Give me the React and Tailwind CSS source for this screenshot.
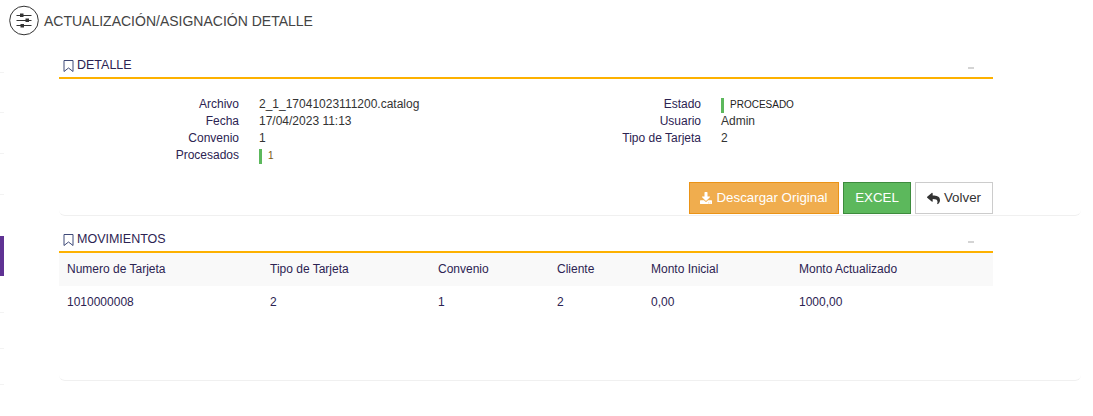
import React from 'react';
import { FaDownload, FaReply } from 'react-icons/fa';

const leftInfo = [
  ['Archivo', '2_1_17041023111200.catalog'],
  ['Fecha', '17/04/2023 11:13'],
  ['Convenio', '1'],
];

const rightInfo = [
  ['Usuario', 'Admin'],
  ['Tipo de Tarjeta', '2'],
];

const columns = [
  ['Numero de Tarjeta', '1010000008', 'w-[203px]'],
  ['Tipo de Tarjeta', '2', 'w-[168px]'],
  ['Convenio', '1', 'w-[119px]'],
  ['Cliente', '2', 'w-[94px]'],
  ['Monto Inicial', '0,00', 'w-[148px]'],
  ['Monto Actualizado', '1000,00', 'w-[202px]'],
];

function InfoRow({ label, children }) {
  return (
    <div className="flex h-[17px] items-center">
      <div className="w-[180px] text-right text-[#2c2352]">{label}</div>
      <div className="ml-5 flex items-center text-[#333]">{children}</div>
    </div>
  );
}

function StatusValue({ children, className }) {
  return (
    <>
      <span className="mt-[4px] h-[15px] w-[3px] bg-[#5cb85c]" />
      <span className={className}>{children}</span>
    </>
  );
}

function SectionHeader({ title, textOffset }) {
  return (
    <div className={`flex w-[934px] items-end justify-between border-b-2 border-[#fdb100] pl-1 pr-[19px] ${textOffset}`}>
      <div className="flex items-center gap-[3px] text-[12.5px] leading-[15px] text-[#2c2352]">
        <svg width="11" height="12" viewBox="0 0 11 12" fill="none" stroke="#3f4a78" strokeWidth="1">
          <path d="M1 .5h9v11L5.5 8 1 11.5z" />
        </svg>
        {title}
      </div>
      <span className="mb-[4px] h-[2px] w-[6px] bg-[#d4d4d4]" />
    </div>
  );
}

function App() {
  return (
    <div className="flex h-[416px] w-[1093px] overflow-hidden bg-white font-['Liberation_Sans',Arial,sans-serif] text-xs">
      <div className="w-[4px] pt-[32px]">
        <div className="h-[41px] border-b border-[#f3f3f3]" />
        <div className="h-[40px] border-b border-[#f3f3f3]" />
        <div className="h-[41px] border-b border-[#f3f3f3]" />
        <div className="h-[41px] border-b border-[#f3f3f3]" />
        <div className="mt-[41px] h-10 bg-[#5f3293]" />
        <div className="h-[37px] border-b border-[#f3f3f3]" />
        <div className="h-[36px] border-b border-[#f3f3f3]" />
        <div className="h-[36px] border-b border-[#f3f3f3]" />
      </div>

      <div className="flex-1">
        <div className="flex h-[42px] items-start gap-[5px] pl-[5px] pt-[5px]">
          <svg width="30" height="31" viewBox="0 0 30 31" fill="none" stroke="#333" strokeWidth="1">
            <circle cx="15" cy="15.5" r="14.3" />
            <path d="M7.5 10.5h15M7.5 15.5h15M7.5 20.5h15" />
            <path fill="#333" stroke="none" d="M11 8.5h3.5v3.5H11zM16.5 13.5H20v3.5h-3.5zM11.5 19H15v3.5h-3.5z" />
          </svg>
          <h1 className="mt-[7px] text-[14px] leading-[18px] font-normal text-[#444]">ACTUALIZACIÓN/ASIGNACIÓN DETALLE</h1>
        </div>

        <div className="ml-[55px] h-[174px] w-[1022px] rounded-b-md border-b border-[#f0f0f0]">
          <SectionHeader title="DETALLE" textOffset="h-[37px] pb-[4px]" />
          <div className="mt-[16px] grid w-[924px] grid-cols-2">
            <div>
              {leftInfo.map(([label, value]) => (
                <InfoRow key={label} label={label}>{value}</InfoRow>
              ))}
              <InfoRow label="Procesados">
                <StatusValue className="mt-[2px] ml-[6px] text-[10px] text-[#7a5a14]">1</StatusValue>
              </InfoRow>
            </div>
            <div>
              <InfoRow label="Estado">
                <StatusValue className="mt-[2px] ml-[6px] text-[10px] text-[#222]">PROCESADO</StatusValue>
              </InfoRow>
              {rightInfo.map(([label, value]) => (
                <InfoRow key={label} label={label}>{value}</InfoRow>
              ))}
            </div>
          </div>
          <div className="mt-[19px] flex w-[934px] justify-end gap-1 text-[13.33px]">
            <button className="flex h-8 w-[150px] items-center justify-center gap-1 border border-[#eb9316] bg-[#f0ad4e] text-white">
              <FaDownload size={12} />
              Descargar Original
            </button>
            <button className="h-8 w-[68px] border border-[#3d8b3d] bg-[#5cb85c] text-white">EXCEL</button>
            <button className="flex h-8 w-[78px] items-center justify-center gap-1 border border-[#ccc] bg-white text-[#333]">
              <FaReply size={13} />
              Volver
            </button>
          </div>
        </div>

        <div className="ml-[55px] h-[165px] w-[1022px] rounded-b-md border-b border-[#f0f0f0]">
          <SectionHeader title="MOVIMIENTOS" textOffset="h-[37px] pb-[4px]" />
          <table className="w-[934px] table-fixed text-left">
            <thead>
              <tr className="h-[33px] bg-[#f9f9f9]">
                {columns.map(([head, , width]) => (
                  <th key={head} className={`${width} pb-[2px] pl-2 font-normal text-[#2c2352]`}>{head}</th>
                ))}
              </tr>
            </thead>
            <tbody>
              <tr className="h-[33px]">
                {columns.map(([head, cell]) => (
                  <td key={head} className="pb-[2px] pl-2 text-[#2c2352]">{cell}</td>
                ))}
              </tr>
            </tbody>
          </table>
        </div>
      </div>
    </div>
  );
}

export default App;
